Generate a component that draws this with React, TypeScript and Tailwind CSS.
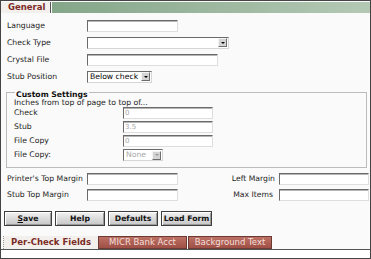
const FONT = { fontFamily: '"DejaVu Sans", Verdana, sans-serif' };

function TextBox({ w, value, disabled }: { w: string; value?: string; disabled?: boolean }) {
  return (
    <div
      className={`${w} h-[12px] shrink-0 border border-t-[#6a6a6a] border-l-[#6a6a6a] border-b-[#dedede] border-r-[#dedede] shadow-[inset_0_1px_0_#b5b5b5] bg-white px-[1px] text-[7px] leading-[10px] ${
        disabled ? 'text-[#a8a8a8]' : 'text-black'
      }`}
    >
      {value}
    </div>
  );
}

function Select({ w, value, disabled }: { w: string; value?: string; disabled?: boolean }) {
  return (
    <div
      className={`${w} h-[12px] shrink-0 flex items-center border border-t-[#6a6a6a] border-l-[#6a6a6a] border-b-[#d6d6d6] border-r-[#d6d6d6] bg-white`}
    >
      <span className={`flex-1 pl-[2px] text-[7.7px] leading-[10px] ${disabled ? 'text-[#a8a8a8]' : 'text-black'}`}>
        {value}
      </span>
      <span className="w-[9px] h-[9px] mr-[1px] flex items-center justify-center bg-[#d4d4d4] border border-t-[#f4f4f4] border-l-[#f4f4f4] border-b-[#6e6e6e] border-r-[#6e6e6e]">
        <span
          className={`w-0 h-0 border-l-[2px] border-r-[2px] border-t-[2px] border-l-transparent border-r-transparent ${
            disabled ? 'border-t-[#9a9a9a]' : 'border-t-black'
          }`}
        />
      </span>
    </div>
  );
}

function Row({ label, children, labelW = 'w-[80px]', h = 'h-[17px]' }: { label: string; children: React.ReactNode; labelW?: string; h?: string }) {
  return (
    <div className={`flex items-center ${h}`}>
      <span className={`${labelW} shrink-0 text-[7.7px] text-[#222]`}>{label}</span>
      {children}
    </div>
  );
}

function Button({ children, w }: { children: React.ReactNode; w: string }) {
  return (
    <div
      className={`${w} h-[15px] flex items-center justify-center border border-[#3e3e3e] bg-gradient-to-b from-[#f2f2f2] to-[#c6c6c6] text-[7.7px] font-bold text-[#111] shadow-[inset_1px_1px_0_#ffffff,inset_-1px_-1px_0_#9a9a9a]`}
    >
      {children}
    </div>
  );
}

export default function App() {
  return (
    <div style={FONT} className="w-[371px] h-[259px] bg-white">
      <div className="w-[371px] h-[259px] border border-[#444] bg-[#fafafa] flex flex-col">
        {/* Top tab strip */}
        <div className="h-[12px] flex shrink-0 pt-[1px]">
          <div className="w-[50px] bg-[#f2efec] border-r border-[#555] flex items-center pl-[7px] text-[8.5px] font-bold text-[#7b2b26]">
            General
          </div>
          <div className="flex-1 ml-[1px] bg-gradient-to-r from-[#84a689] to-[#b4c9b4]" />
        </div>

        {/* Form body */}
        <div className="flex flex-col pl-[6px] pr-[1px] pt-[4px]">
          <Row label="Language">
            <TextBox w="w-[91px]" />
          </Row>
          <Row label="Check Type">
            <Select w="w-[142px]" />
          </Row>
          <Row label="Crystal File">
            <TextBox w="w-[131px]" />
          </Row>
          <Row label="Stub Position">
            <Select w="w-[65px]" value="Below check" />
          </Row>

          {/* Custom Settings */}
          <div className="relative mt-[7px] -ml-[1px] mr-[2px] border border-[#bcbcbc] pl-[7px] pt-[6px] pb-[6px]">
            <span className="absolute -top-[2px] left-[8px] bg-[#fafafa] px-[1px] text-[7.7px] font-bold leading-[8px] text-[#111]">
              Custom Settings
            </span>
            <div className="text-[7.7px] leading-[8px] text-[#222]">Inches from top of page to top of...</div>
            <div className="flex flex-col gap-[2px]">
              <Row label="Check" labelW="w-[109px]" h="h-[12px]">
                <TextBox w="w-[90px]" value="0" disabled />
              </Row>
              <Row label="Stub" labelW="w-[109px]" h="h-[12px]">
                <TextBox w="w-[90px]" value="3.5" disabled />
              </Row>
              <Row label="File Copy" labelW="w-[109px]" h="h-[12px]">
                <TextBox w="w-[90px]" value="0" disabled />
              </Row>
              <Row label="File Copy:" labelW="w-[109px]" h="h-[12px]">
                <Select w="w-[40px]" value="None" disabled />
              </Row>
            </div>
          </div>

          {/* Margins */}
          <div className="flex flex-col gap-[4px] mt-[5px]">
            <div className="flex items-center h-[12px]">
              <Row label="Printer's Top Margin" h="h-[12px]">
                <TextBox w="w-[91px]" />
              </Row>
              <span className="ml-auto mr-[4px] text-[7.7px] text-[#222]">Left Margin</span>
              <TextBox w="w-[90px]" />
            </div>
            <div className="flex items-center h-[12px]">
              <Row label="Stub Top Margin" h="h-[12px]">
                <TextBox w="w-[91px]" />
              </Row>
              <span className="ml-auto mr-[6px] text-[7.7px] text-[#222]">Max Items</span>
              <TextBox w="w-[90px]" />
            </div>
          </div>

          {/* Buttons */}
          <div className="flex gap-[3px] mt-[10px] -ml-[3px]">
            <Button w="w-[48px]">
              <span className="underline">S</span>ave
            </Button>
            <Button w="w-[50px]">Help</Button>
            <Button w="w-[50px]">Defaults</Button>
            <Button w="w-[51px]">Load Form</Button>
          </div>
        </div>

        {/* Bottom tabs */}
        <div className="mt-[10px] flex items-end h-[14px] border-b border-[#555] pl-[2px]">
          <div className="w-[95px] h-[13px] flex items-center pl-[7px] bg-[#f2efec] text-[8.5px] font-bold text-[#7b2b26] border-l border-dotted border-[#999]">
            Per-Check Fields
          </div>
          <div className="w-[89px] h-[13px] flex items-center justify-center bg-gradient-to-b from-[#bd7064] to-[#9f5046] border border-[#6b3a33] text-[8.5px] text-[#f3dfda]">
            MICR Bank Acct
          </div>
          <div className="w-[84px] h-[13px] ml-[1px] flex items-center justify-center bg-gradient-to-b from-[#bd7064] to-[#9f5046] border border-[#6b3a33] text-[8.5px] text-[#f3dfda]">
            Background Text
          </div>
        </div>
        <div className="flex-1 bg-white" />
      </div>
    </div>
  );
}
